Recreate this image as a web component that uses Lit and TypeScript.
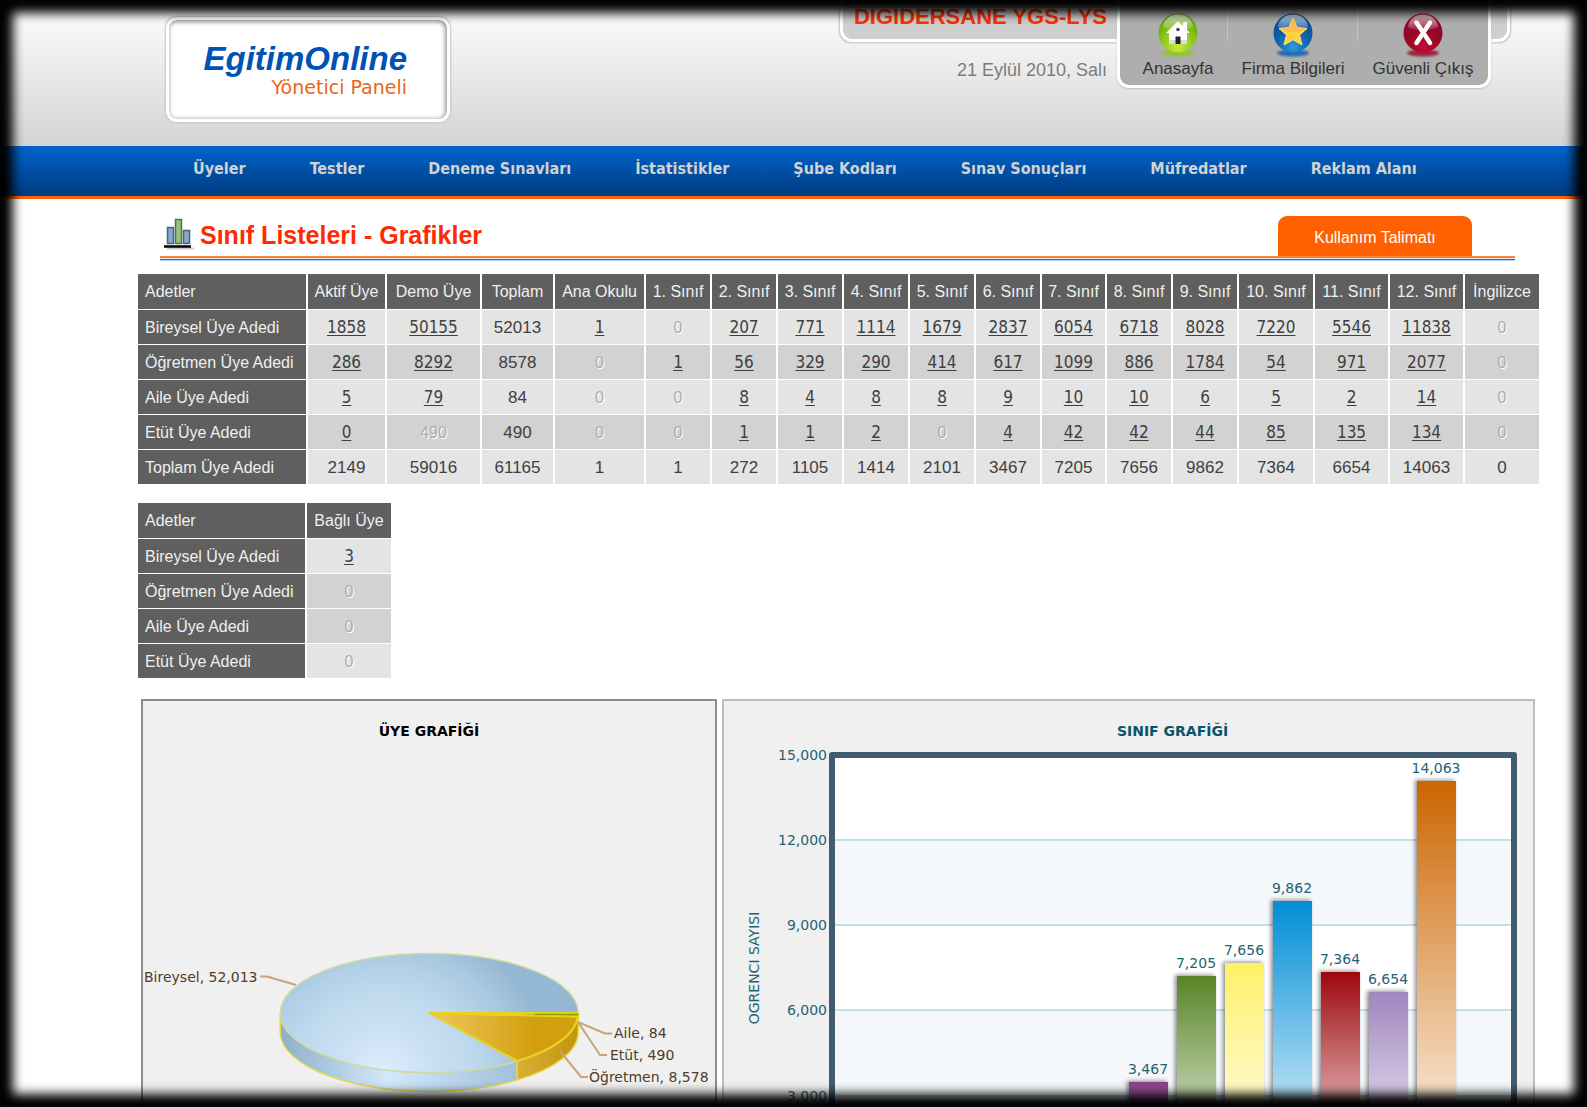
import { LitElement, html, svg, css } from "lit";
import { customElement } from "lit/decorators.js";
import { classMap } from "lit/directives/class-map.js";

type CellKind = "link" | "off" | "sum";
interface Cell { text: string; kind: CellKind; }
interface Row { label: string; cells: Cell[]; shade?: boolean; }

/* "_" marks a linked count, "~" an inactive one, no mark a computed total. */
const parse = (spec: string): Cell[] =>
  spec.split(" ").map((t) => ({
    text: t.replace(/[_~]/, ""),
    kind: t.endsWith("_") ? "link" : t.endsWith("~") ? "off" : "sum",
  }));

const MENU = ["Üyeler", "Testler", "Deneme Sınavları", "İstatistikler", "Şube Kodları", "Sınav Sonuçları", "Müfredatlar", "Reklam Alanı"];

const HEADS = ["Adetler", "Aktif Üye", "Demo Üye", "Toplam", "Ana Okulu", "1. Sınıf", "2. Sınıf", "3. Sınıf", "4. Sınıf", "5. Sınıf", "6. Sınıf", "7. Sınıf", "8. Sınıf", "9. Sınıf", "10. Sınıf", "11. Sınıf", "12. Sınıf", "İngilizce"];
const WIDTHS = [170, 79, 95, 73, 91, 66, 66, 66, 66, 66, 66, 65, 66, 66, 76, 75, 75, 74];

const ROWS: Row[] = [
  { label: "Bireysel Üye Adedi", cells: parse("1858_ 50155_ 52013 1_ 0~ 207_ 771_ 1114_ 1679_ 2837_ 6054_ 6718_ 8028_ 7220_ 5546_ 11838_ 0~") },
  { label: "Öğretmen Üye Adedi", shade: true, cells: parse("286_ 8292_ 8578 0~ 1_ 56_ 329_ 290_ 414_ 617_ 1099_ 886_ 1784_ 54_ 971_ 2077_ 0~") },
  { label: "Aile Üye Adedi", cells: parse("5_ 79_ 84 0~ 0~ 8_ 4_ 8_ 8_ 9_ 10_ 10_ 6_ 5_ 2_ 14_ 0~") },
  { label: "Etüt Üye Adedi", shade: true, cells: parse("0_ 490~ 490 0~ 0~ 1_ 1_ 2_ 0~ 4_ 42_ 42_ 44_ 85_ 135_ 134_ 0~") },
  { label: "Toplam Üye Adedi", cells: parse("2149 59016 61165 1 1 272 1105 1414 2101 3467 7205 7656 9862 7364 6654 14063 0") },
];

const LINKED: Row[] = [
  { label: "Bireysel Üye Adedi", cells: parse("3_") },
  { label: "Öğretmen Üye Adedi", shade: true, cells: parse("0~") },
  { label: "Aile Üye Adedi", shade: true, cells: parse("0~") },
  { label: "Etüt Üye Adedi", cells: parse("0~") },
];

@customElement("count-table")
class CountTable extends LitElement {
  static properties = { heads: { attribute: false }, rows: { attribute: false }, widths: { attribute: false } };
  declare heads: string[];
  declare rows: Row[];
  declare widths: number[];

  static styles = css`
    :host { display: block; }
    .grid { width: 100%; table-layout: fixed; border-collapse: separate; border-spacing: 0; font: 16px/20px "Liberation Sans", Arial, sans-serif; }
    .head, .cell, .side {
      box-sizing: border-box; height: 35px; padding: 1px 0 0; text-align: center; white-space: nowrap; font-weight: 400;
      border-right: 2px solid #fff; border-bottom: 1px solid #fff; background-clip: padding-box;
    }
    .head { height: 36px; }
    .head:last-child, .cell:last-child { border-right: 0; }
    .head, .side { background-color: #5f5f5f; color: #f0f0f0; }
    .side, .head:first-child { text-align: left; padding-left: 7px; }
    .cell { background-color: #e4e4e4; color: #3f3f3f; font-size: 17px; }
    .shade .cell { background-color: #d2d2d2; }
    .off { color: #adadad; font-size: 16px; text-shadow: 1px 1px 0 #fff; }
    .link { color: #3f3f3f; font-family: "DejaVu Sans Condensed", Tahoma, sans-serif; font-size: 17px; text-decoration: underline; text-underline-offset: 2px; }
  `;

  render() {
    return html`<table class="grid">
      <colgroup>${this.widths.map((w) => html`<col width=${w}>`)}</colgroup>
      <thead><tr>${this.heads.map((h) => html`<th class="head" scope="col">${h}</th>`)}</tr></thead>
      <tbody>
        ${this.rows.map((r) => html`<tr class=${classMap({ shade: !!r.shade })}>
          <th class="side" scope="row">${r.label}</th>
          ${r.cells.map((c) => html`<td class="cell">${c.kind === "link"
            ? html`<a class="link" href="#">${c.text}</a>`
            : html`<span class=${c.kind}>${c.text}</span>`}</td>`)}
        </tr>`)}
      </tbody>
    </table>`;
  }
}

const chartText = css`
  :host { display: block; }
  .chart { display: block; width: 100%; height: auto; font-family: "DejaVu Sans", Verdana, sans-serif; font-size: 14px; }
`;

@customElement("member-pie")
class MemberPie extends LitElement {
  static styles = [chartText, css`
    .label { fill: #523a28; }
    .leader { fill: none; stroke: #c8a478; stroke-width: 2; }
    .edge { stroke: #e3d84a; stroke-width: 1.5; stroke-linejoin: round; }
    .soft { fill: url(#top); stroke: #cddba0; stroke-width: 1.5; }
    .gold { stroke: #e8d21c; stroke-width: 2; stroke-linejoin: round; }
  `];

  render() {
    return html`<svg class="chart" viewBox="143 742 572 440" role="img" aria-label="ÜYE GRAFİĞİ">
      <defs>
        <radialGradient id="top" gradientUnits="userSpaceOnUse" cx="383" cy="1070" r="150" gradientTransform="translate(383 1070) scale(1.1 1) translate(-383 -1070)">
          <stop offset="0" stop-color="#dcedfb"/><stop offset=".3" stop-color="#cadff4"/><stop offset=".55" stop-color="#bdd8ec"/><stop offset=".8" stop-color="#a9c9e1"/><stop offset="1" stop-color="#94b7d3"/>
        </radialGradient>
        <linearGradient id="side" x1="0" x2="1" y1="0" y2="0">
          <stop offset="0" stop-color="#8dafcb"/><stop offset=".45" stop-color="#d3e8fa"/><stop offset="1" stop-color="#a0c0dc"/>
        </linearGradient>
        <linearGradient id="gold" x1="0" x2="1" y1="0" y2="0">
          <stop offset="0" stop-color="#efc760"/><stop offset=".7" stop-color="#d2a00e"/><stop offset="1" stop-color="#d2a00e"/>
        </linearGradient>
        <linearGradient id="goldSide" x1="0" x2="1" y1="0" y2="0">
          <stop offset="0" stop-color="#d9af35"/><stop offset="1" stop-color="#c3950c"/>
        </linearGradient>
      </defs>
      <path class="edge" fill="url(#side)" d="M280.300 1013A149 59.500 0 0 0 517.300 1060.900V1079.900A149 59.500 0 0 1 280.300 1032Z"/>
      <path class="edge" fill="url(#goldSide)" d="M578.300 1013A149 59.500 0 0 1 517.300 1060.900V1079.900A149 59.500 0 0 0 578.300 1032Z"/>
      <ellipse class="soft" cx="429.300" cy="1013" rx="149" ry="59.500"/>
      <path class="gold" fill="url(#gold)" d="M429.300 1013L578 1016.500A149 59.500 0 0 1 517.300 1060.900Z"/>
      <path class="gold" fill="#86a50a" d="M429.300 1013H578.300L578 1016.500Z"/>
      <path d="M535 1014.500H578" stroke="#86a806" stroke-width="1.500"/>
      <path class="leader" d="M296 985L267 976.500H260"/>
      <path class="leader" d="M578 1022L605 1033.500H612"/>
      <path class="leader" d="M578 1022L600 1055H607"/>
      <path class="leader" d="M560 1051L581 1077H588"/>
      <text class="label" x="144" y="982">Bireysel, 52,013</text>
      <text class="label" x="614" y="1038">Aile, 84</text>
      <text class="label" x="610" y="1060">Etüt, 490</text>
      <text class="label" x="589" y="1082">Öğretmen, 8,578</text>
    </svg>`;
  }
}

const BASE = 1181;
const PER_UNIT = 0.02843;
const BARS = [
  { slot: 6, v: 3467, c: "#8b3f8b" }, { slot: 7, v: 7205, c: "#588526" }, { slot: 8, v: 7656, c: "#fff068" },
  { slot: 9, v: 9862, c: "#008ed6" }, { slot: 10, v: 7364, c: "#9d080d" }, { slot: 11, v: 6654, c: "#a186be" },
  { slot: 12, v: 14063, c: "#cc6600" },
];

@customElement("class-bars")
class ClassBars extends LitElement {
  static styles = [chartText, css`
    .label { fill: #1f6375; }
    .plot { fill: #fff; }
    .band { fill: #f4f8fa; }
    .line { stroke: #bfe0e8; stroke-width: 2; }
    .frame { fill: none; stroke: #405c6e; stroke-width: 6; stroke-linejoin: round; }
    .bar { filter: drop-shadow(-2px -1px 2px rgba(0, 0, 0, 0.45)); }
  `];

  render() {
    const y = (v: number) => Math.round(BASE - v * PER_UNIT);
    const fmt = (v: number) => v.toLocaleString("en-US");
    return html`<svg class="chart" viewBox="724 742 809 440" role="img" aria-label="SINIF GRAFİĞİ">
      <defs>${BARS.map((b) => svg`<linearGradient id=${"g" + b.slot} x1="0" x2="0" y1="0" y2="1">
        <stop offset="0" stop-color=${b.c}/><stop offset="1" stop-color="#ffffff"/></linearGradient>`)}</defs>
      <rect class="plot" x="832" y="755" width="682" height="426"/>
      <rect class="band" x="832" y=${y(12000)} width="678" height="85"/>
      <rect class="band" x="832" y=${y(6000)} width="678" height="85"/>
      ${[3000, 6000, 9000, 12000].map((v) => svg`<path class="line" d="M832 ${y(v)}H1512"/>`)}
      ${BARS.map((b) => svg`<rect class="bar" fill=${`url(#g${b.slot})`} x=${841 + b.slot * 48} y=${y(b.v)} width="39" height=${BASE - y(b.v)}/>
        <text class="label" text-anchor="middle" x=${860 + b.slot * 48} y=${y(b.v) - 8}>${fmt(b.v)}</text>`)}
      <rect class="frame" x="832" y="755" width="682" height="426"/>
      ${[3000, 6000, 9000, 12000, 15000].map((v) => svg`<text class="label" text-anchor="end" x="827" y=${y(v) + 5}>${fmt(v)}</text>`)}
      <text class="label" text-anchor="middle" transform="translate(759 968) rotate(-90)">OGRENCI SAYISI</text>
    </svg>`;
  }
}

const orb = (id: string, light: string, mid: string, dark: string, glyph: unknown) => html`
  <svg class="orb" viewBox="0 0 40 46" aria-hidden="true">
    <defs>
      <radialGradient id=${id} cx=".5" cy=".85" r=".85">
        <stop offset="0" stop-color=${light}/><stop offset=".5" stop-color=${mid}/><stop offset="1" stop-color=${dark}/>
      </radialGradient>
      <linearGradient id=${id + "h"} x1="0" x2="0" y1="0" y2="1">
        <stop offset="0" stop-color="#fff" stop-opacity=".75"/><stop offset="1" stop-color="#fff" stop-opacity=".1"/>
      </linearGradient>
      <filter id=${id + "b"} x="-.3" width="1.6" y="-.5" height="2"><feGaussianBlur stdDeviation="1.200"/></filter>
    </defs>
    <ellipse cx="20" cy="40" rx="16" ry="3.500" fill=${mid} opacity=".85" filter=${`url(#${id}b)`}/>
    <circle cx="20" cy="20" r="19.500" fill=${`url(#${id})`}/>
    <path d="M20 1.500C29 1.500 35 8 35 14C30 18 10 18 5 14C5 8 11 1.500 20 1.500Z" fill=${`url(#${id}h)`}/>
    ${glyph}
  </svg>`;

const HOUSE = svg`<path d="M20 8L32 20H29V31H11V20H8Z" fill="#fff"/><path d="M25 9H29V17L25 13Z" fill="#fff"/>
  <path d="M11 27H29V31H11Z" fill="#dcdcdc"/><circle cx="20" cy="16.500" r="1.800" fill="#444"/><path d="M17.500 23.500H22.500V31H17.500Z" fill="#222"/>`;
const STAR = svg`<path d="M20 5L24 14.500L34 15.500L26.500 22L29 32L20 26.800L11 32L13.500 22L6 15.500L16 14.500Z" fill="#ffd23e" stroke="#ffe27a" stroke-width="1" stroke-linejoin="round"/>
  <path d="M20 6L24 14.500L33 15.800C27 21 15 19 7 16L16 14.500Z" fill="#ffb648" opacity=".75"/>`;
const CROSS = svg`<path d="M13.500 9.500L27 30M27 9.500L13.500 30" stroke="#fff" stroke-width="4.500" stroke-linecap="round"/>`;

@customElement("app-root")
class AppRoot extends LitElement {
  static styles = css`
    :host { display: block; height: 100vh; overflow: hidden; background: #fff; font-family: "Liberation Sans", Arial, sans-serif; }
    .vignette { position: fixed; inset: 0; pointer-events: none; box-shadow: inset 0 0 11px 13px #000; z-index: 2; }

    .top { display: flex; align-items: flex-start; height: 146px; padding: 0 77px 0 166px; background: linear-gradient(#fff, #f8f8f8 18%, #d6d6d6 95%); box-sizing: border-box; }
    .logo {
      display: flex; flex-direction: column; align-items: flex-end; box-sizing: border-box; width: 284px; height: 105px; margin-top: 17px;
      padding: 21px 40px 0 0; background: #fff; border: 3px solid #fff; border-radius: 11px;
      box-shadow: inset -1px 1px 4px 1px #999, 0 0 2px 1px #c4c4c4;
    }
    .brand { font: italic 700 33px/36px "Liberation Sans", Arial, sans-serif; color: #0052b4; }
    .sub { font: 19px/20px "DejaVu Sans", Verdana, sans-serif; color: #ee6414; }
    .account { display: flex; align-items: flex-start; margin-left: auto; }
    .who { width: 277px; }
    .firm { box-sizing: border-box; height: 42px; padding: 4px 10px 0 0; text-align: right; font: 700 22px/26px "Liberation Sans", Arial, sans-serif; color: #ff3000; white-space: nowrap; background: #cfcfcf; border: 3px solid #fff; border-width: 0 0 3px 3px; border-radius: 0 0 0 12px; box-shadow: -1px 1px 2px #bdbdbd; }
    .date { padding: 17px 10px 0 0; text-align: right; font-size: 18px; line-height: 22px; color: #7c7c7c; }
    .tools { position: relative; display: flex; box-sizing: border-box; height: 88px; background: #aeaeae; border: 3px solid #fff; border-top: 0; border-radius: 0 0 12px 12px; box-shadow: 0 1px 2px #bdbdbd; }
    .tool { display: flex; flex-direction: column; align-items: center; box-sizing: border-box; width: 130px; padding-top: 13px; font-size: 17px; line-height: 20px; color: #333; text-decoration: none; white-space: nowrap; background: linear-gradient(#c4c4c4, #c4c4c4) right top / 1px 41px no-repeat; }
    .tool:first-child { width: 108px; padding-left: 8px; }
    .tool:last-child { background: none; }
    .orb { display: block; width: 40px; height: 46px; }
    .stub { box-sizing: border-box; width: 19px; height: 42px; background: #cfcfcf; border: 3px solid #fff; border-width: 0 3px 3px 0; border-radius: 0 0 12px 0; box-shadow: 1px 1px 2px #bdbdbd; }

    .menu { display: flex; gap: 64px; height: 50px; padding-left: 193px; background: linear-gradient(#0062cb, #0058b5 30%, #003c7e); border-bottom: 3px solid #ff6208; }
    .item { font: 700 16px/46px "DejaVu Sans Condensed", Tahoma, sans-serif; color: #d2d2d2; text-decoration: none; white-space: nowrap; }

    .titlebar { display: flex; align-items: flex-end; height: 57px; margin: 0 72px 0 160px; }
    .bars { width: 30px; height: 32px; margin: 0 6px 6px 4px; }
    .title { flex: 1; margin: 0 0 7px; font-size: 25px; line-height: 28px; color: #ff2a00; }
    .help { margin-right: 43px; padding: 4px 0 0; width: 194px; height: 40px; border: 0; border-radius: 9px 9px 0 0; background: #ff6000; color: #fff; font: 16px/20px "Liberation Sans", Arial, sans-serif; cursor: pointer; }
    .rule { height: 5px; margin: 0 72px 13px 160px; background: linear-gradient(#ff8034 0 2px, #d9e6ee 2px 3px, #2a70cc 3px 4px, #a9cdf0 4px); }

    .body { margin: 0 49px 0 138px; }
    .linked { width: 253px; margin: 18px 0 20px; }
    .panels { display: grid; grid-template-columns: 576fr 813fr; gap: 5px; margin: 0 3px; }
    .panel { border: 2px solid #8c8c8c; background: #f0f0f0; overflow: hidden; }
    .panel.cool { border-color: #b4bfc9; }
    .caption { margin: 0; padding: 20px 0 1px; text-align: center; font: 700 14px/20px "DejaVu Sans", Verdana, sans-serif; color: #000; }
    .cool .caption { padding-left: 88px; color: #08556a; }
  `;

  render() {
    return html`
      <header class="top">
        <div class="logo"><span class="brand">EgitimOnline</span><span class="sub">Yönetici Paneli</span></div>
        <div class="account">
          <div class="who"><div class="firm">DIGIDERSANE YGS-LYS</div><div class="date">21 Eylül 2010, Salı</div></div>
          <div class="tools">
            <a class="tool" href="#">${orb("home", "#c8ec3a", "#8cc81a", "#5b9a0a", HOUSE)}<span>Anasayfa</span></a>
            <a class="tool" href="#">${orb("firm", "#2e9be0", "#0d5fae", "#0a4a90", STAR)}<span>Firma Bilgileri</span></a>
            <a class="tool" href="#">${orb("exit", "#c40a34", "#960826", "#8a0a26", CROSS)}<span>Güvenli Çıkış</span></a>
          </div>
          <div class="stub"></div>
        </div>
      </header>
      <nav class="menu">${MENU.map((m) => html`<a class="item" href="#">${m}</a>`)}</nav>
      <main>
        <div class="titlebar">
          <svg class="bars" viewBox="0 0 30 32" aria-hidden="true">
            <path d="M3 30.500H30" stroke="#ccc" stroke-width="2"/>
            <rect x="3.500" y="9.500" width="6" height="16" fill="#86a8cb" stroke="#48617f" stroke-width="1.500"/>
            <rect x="19.500" y="12.500" width="6" height="13" fill="#86a8cb" stroke="#48617f" stroke-width="1.500"/>
            <rect x="11.500" y="1.500" width="6" height="24" fill="#9cbf80" stroke="#56763f" stroke-width="1.500"/>
            <path d="M0 28.500H27" stroke="#000" stroke-width="2.500"/>
          </svg>
          <h1 class="title">Sınıf Listeleri - Grafikler</h1>
          <button class="help" type="button">Kullanım Talimatı</button>
        </div>
        <div class="rule"></div>
        <div class="body">
          <count-table .heads=${HEADS} .rows=${ROWS} .widths=${WIDTHS}></count-table>
          <count-table class="linked" .heads=${["Adetler", "Bağlı Üye"]} .rows=${LINKED} .widths=${[169, 84]}></count-table>
          <div class="panels">
            <section class="panel"><h2 class="caption">ÜYE GRAFİĞİ</h2><member-pie></member-pie></section>
            <section class="panel cool"><h2 class="caption">SINIF GRAFİĞİ</h2><class-bars></class-bars></section>
          </div>
        </div>
      </main>
      <div class="vignette"></div>`;
  }
}
